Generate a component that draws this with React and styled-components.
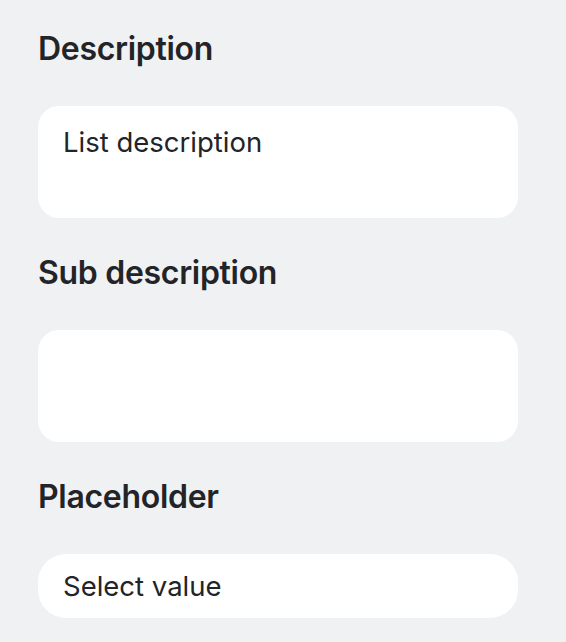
import React from "react";
import styled, { createGlobalStyle } from "styled-components";

const Global = createGlobalStyle`
  html, body { margin: 0; padding: 0; background: #f0f1f3; }
  body { font-family: Inter, "Noto Sans", sans-serif; }
  * { box-sizing: border-box; }
`;

const Page = styled.div`
  width: 566px;
  height: 642px;
  padding: 30px 48px 0 38px;
  display: flex;
  flex-direction: column;
  gap: 36px;
  background: #f0f1f3;
  overflow: hidden;
`;

const Field = styled.div`
  display: flex;
  flex-direction: column;
  gap: 38px;
`;

const Label = styled.div`
  font-size: 32px;
  line-height: 38px;
  font-weight: 600;
  color: #232427;
  letter-spacing: -0.3px;
`;

const TextArea = styled.div`
  height: 112px;
  background: #ffffff;
  border-radius: 21px;
  padding: 19px 25px;
  font-size: 27.5px;
  line-height: 34px;
  color: #232427;
`;

const Select = styled.div`
  height: 64px;
  background: #ffffff;
  border-radius: 28px;
  padding: 0 25px;
  display: flex;
  align-items: center;
  font-size: 27.5px;
  color: #232427;
`;

export default function App() {
  return (
    <>
      <Global />
      <Page>
        <Field>
          <Label>Description</Label>
          <TextArea>List description</TextArea>
        </Field>
        <Field>
          <Label>Sub description</Label>
          <TextArea />
        </Field>
        <Field>
          <Label>Placeholder</Label>
          <Select>Select value</Select>
        </Field>
      </Page>
    </>
  );
}
